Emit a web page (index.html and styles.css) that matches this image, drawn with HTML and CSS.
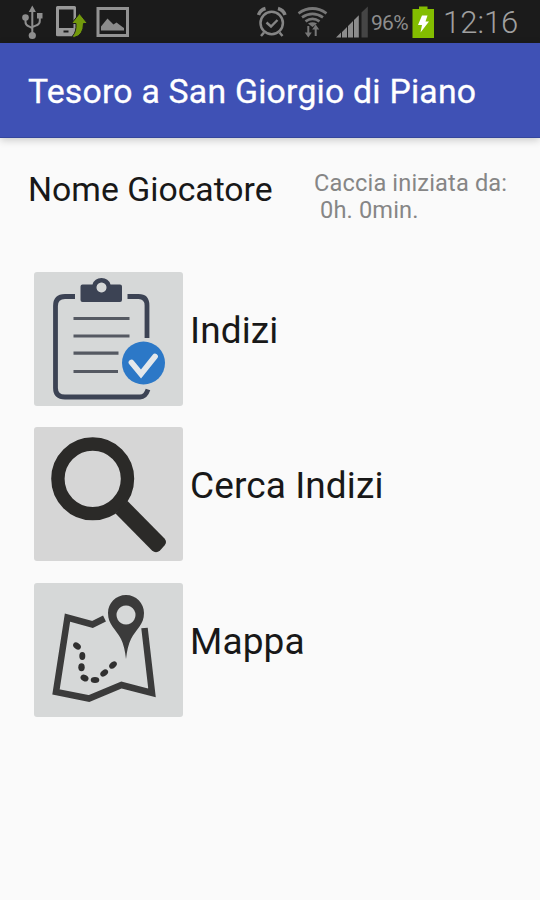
FILE: index.html
```html
<!DOCTYPE html>
<html lang="it">
<head>
<meta charset="utf-8">
<title>Tesoro a San Giorgio di Piano</title>
<link rel="stylesheet" href="styles.css">
</head>
<body>
<header class="status">
  <svg class="usb" width="22" height="36" viewBox="22 4 22 36" fill="none" stroke="#8e8e8e" stroke-width="2">
    <path d="M32.300 9V36M25.500 18v4q0 3 3 4.200l3.800 2M39.800 16v5q0 3-3 4.200l-4.500 2"/>
    <path d="M32.300 5.500l3.600 6.500h-7.200z" fill="#8e8e8e" stroke="none"/>
    <circle cx="25.500" cy="17.500" r="3.300" fill="#8e8e8e" stroke="none"/>
    <path d="M37 13h5.500v5.500H37z" fill="#8e8e8e" stroke="none"/>
    <circle cx="32.300" cy="35.500" r="3.600" fill="#8e8e8e" stroke="none"/>
  </svg>
  <svg class="phone" width="33" height="36" viewBox="55 4 33 36">
    <path fill="#999" fill-rule="evenodd" d="M57.500 6h17q1.500 0 1.500 1.500V35q0 1.300-1.500 1.300h-17q-1.500 0-1.500-1.300V7.500Q56 6 57.500 6zM59 9.500V28h14.500V9.500zM63.500 30.500v2h5v-2z"/>
    <path fill="#72990c" stroke="#1b1b1b" stroke-width="1" d="M79.500 13.500l8 10h-4q0 12-9.500 14-2-.5-1.500-1.500 4-4 3.500-12.500h-4.500z"/>
  </svg>
  <svg class="photo" width="34" height="32" viewBox="96 6 34 32">
    <path d="M98 8.500h29.500V35.500H98z" fill="none" stroke="#939393" stroke-width="3"/>
    <path d="M101 30.500v-4l6.500-8 6 6 3-2 6 4.500 1.500 1v2.500z" fill="#8b8b8b"/>
  </svg>
  <svg class="alarm" width="30" height="32" viewBox="257 6 30 32" fill="none" stroke="#858585">
    <circle cx="271.700" cy="23" r="11.200" stroke-width="2.500"/>
    <path d="M266.500 22.500l4.500 4 6.500-6.500" stroke-width="2.400"/>
    <path d="M258.500 15q1.500-5 7-6.500M285 15q-1.500-5-7-6.500" stroke-width="3.400"/>
    <path d="M264 32.500l-3 3.500M279.500 32.500l3 3.500" stroke-width="2.500"/>
  </svg>
  <svg class="wifi" width="32" height="34" viewBox="297 4 32 34" fill="none" stroke="#777" stroke-width="2.800">
    <path d="M298.500 12.300q14-9.500 28 0M302 16.300q10.500-7 21 0M305.500 20.300q7-4.800 14 0"/>
    <path d="M308 22.500q4.500-2.500 9 0l-4.500 3.500z" fill="#777" stroke="none"/>
    <path d="M308.300 25v8M315.700 35v-8" stroke-width="2"/>
    <path d="M304.800 31.500h7l-3.500 5zM312.200 28.500h7l-3.500-5z" fill="#777" stroke="none"/>
  </svg>
  <svg class="signal" width="33" height="34" viewBox="336 4 33 34">
    <path fill="#8c8c8c" d="M336 36.500l5-5v5zM342 31l5-5v10.500h-5zM348 25l5-5v16.500h-5zM354 19l4.800-4.800v22.300H354z"/>
    <path fill="#454545" d="M361.500 11.500l6.300-6v31h-6.300z"/>
  </svg>
  <span class="percent">96%</span>
  <svg class="battery" width="22" height="32" viewBox="412 5 22 32">
    <path fill="#83bd00" d="M412.500 8h6.500V5.500h8.500V8h6.500v29h-21.500z"/>
    <path fill="#fff" d="M422 14.500h5.500l-2 6h3.500l-8.500 11 1.500-7.500h-4z"/>
  </svg>
  <span class="clock">12:16</span>
</header>
<div class="appbar"><h1>Tesoro a San Giorgio di Piano</h1></div>
<main>
  <section class="player">
    <h2>Nome Giocatore</h2>
    <p><span class="started">Caccia iniziata da:</span><span class="elapsed">0h. 0min.</span></p>
  </section>
  <nav class="menu">
    <div class="item">
      <button aria-label="Indizi">
        <svg width="149" height="135" viewBox="34 272 149 135" fill="none">
          <path d="M75 296.500H65q-9.500 0-9.500 9.500v82q0 9 9.500 9h75q5.500 0 8-7.500M127.500 296.500h11q8.500 0 8.500 9V338" stroke="#3c4354" stroke-width="4.800"/>
          <path d="M73.500 318.500H129.500M73.500 336H129.500M73.500 353.200H118.500M73.500 371.500H118" stroke="#555962" stroke-width="3.200"/>
          <path fill="#3c4354" fill-rule="evenodd" d="M82.500 284.500h10q2-6.500 9-6.500t9 6.500h9.500q2 0 2 2v13.500q0 2-2 2H82.500q-2 0-2-2v-13.500q0-2 2-2zM101.500 282.500a5 5 0 1 0 .01 0z"/>
          <circle cx="143.500" cy="363" r="21.500" fill="#2c78c7"/>
          <path d="M131.500 362.500l9.500 11.500 14-17.500" stroke="#e4e8eb" stroke-width="5.800" stroke-linecap="round"/>
        </svg>
      </button>
      <span class="label">Indizi</span>
    </div>
    <div class="item">
      <button class="search" aria-label="Cerca Indizi">
        <svg width="149" height="135" viewBox="34 427 149 135" fill="none" stroke="#2b2a28">
          <circle cx="92.700" cy="478.800" r="34.800" stroke-width="13.400"/>
          <path fill="#2b2a28" stroke="none" d="M127.500 501L164.500 538.500q3 3.500 0 7l-4.500 5q-4 3.500-8 0L115.500 513.500z"/>
        </svg>
      </button>
      <span class="label">Cerca Indizi</span>
    </div>
    <div class="item">
      <button aria-label="Mappa">
        <svg width="149" height="135" viewBox="34 583 149 135" fill="none">
          <path d="M104.500 618.500L92.500 624.500 67.500 617.500 56 692l33 6.500 32.500-13.500 30.500 8-7.500-65" stroke="#3b3b3b" stroke-width="6.500"/>
          <path fill="#3b3b3b" fill-rule="evenodd" d="M126 595c10 0 18 8 18 18 0 12-8 16-13 26q-3.500 7-5 20-1.500-13-5-20c-5-10-13-14-13-26 0-10 8-18 18-18zM126 605.500a9.500 9.500 0 1 0 .01 0z"/>
          <g fill="#303030">
            <ellipse cx="77" cy="646" rx="4.200" ry="3" transform="rotate(35 77 646)"/>
            <ellipse cx="82.300" cy="656" rx="3" ry="4"/>
            <ellipse cx="81.500" cy="667.300" rx="3.200" ry="4"/>
            <ellipse cx="84.500" cy="678" rx="4.200" ry="3.100" transform="rotate(30 84.500 678)"/>
            <ellipse cx="95" cy="680" rx="4.300" ry="2.900"/>
            <ellipse cx="104.200" cy="673" rx="4.300" ry="3" transform="rotate(-38 104.200 673)"/>
            <ellipse cx="113" cy="665" rx="4.300" ry="3" transform="rotate(-42 113 665)"/>
          </g>
        </svg>
      </button>
      <span class="label">Mappa</span>
    </div>
  </nav>
</main>
</body>
</html>
```
FILE: styles.css
```css
* { box-sizing: border-box; }
body {
  margin: 0;
  width: 540px;
  height: 900px;
  overflow: hidden;
  background: #fafafa;
  font-family: Roboto, "Liberation Sans", sans-serif;
  color: #181818;
}
h1, h2, p { margin: 0; font-weight: 400; }
svg { display: block; flex: none; }
.status {
  display: flex;
  align-items: center;
  height: 43px;
  padding-left: 22px;
  background: #1b1b1b;
  white-space: nowrap;
}
.phone { margin-left: 11px; }
.photo { margin-left: 8px; }
.alarm { margin-left: 127px; }
.wifi { margin-left: 10px; }
.signal { margin-left: 7px; }
.percent { width: 41px; margin-left: 2px; padding-top: 3px; font-size: 21px; letter-spacing: -0.7px; color: #8e8e8e; }
.clock { margin-left: 9px; padding-top: 1px; font-size: 31px; font-weight: 300; color: #a0a0a0; }
.appbar {
  display: flex;
  align-items: center;
  height: 95px;
  padding: 2px 0 0 28px;
  background: #3f51b5;
  border-bottom: 1px solid #35469c;
  box-shadow: 0 2px 8px rgba(0, 0, 0, 0.2);
  color: #fff;
}
h1 { font-size: 33.75px; font-weight: 400; letter-spacing: 0.23px; white-space: nowrap; -webkit-text-stroke: 0.3px #fff; }
.player { display: flex; height: 134px; padding: 32px 0 0 28px; white-space: nowrap; }
h2 { width: 286px; font-size: 33.75px; line-height: 40px; }
.player p { font-size: 23.600px; line-height: 27px; letter-spacing: 0.15px; color: #868686; }
.player p span { display: block; }
.elapsed { padding-left: 6px; }
.menu { display: flex; flex-direction: column; gap: 21.400px; padding-left: 34px; }
.item { display: flex; align-items: flex-start; height: 134px; }
button { display: flex; align-items: flex-start; height: 134px; padding: 0; border: 0; border-radius: 3px; overflow: hidden; background: #d6d8d8; }
.search { background: #d6d6d6; }
.label { margin-left: 7px; padding-top: 37px; font-size: 37px; line-height: 44px; letter-spacing: 0.1px; white-space: nowrap; }
```
